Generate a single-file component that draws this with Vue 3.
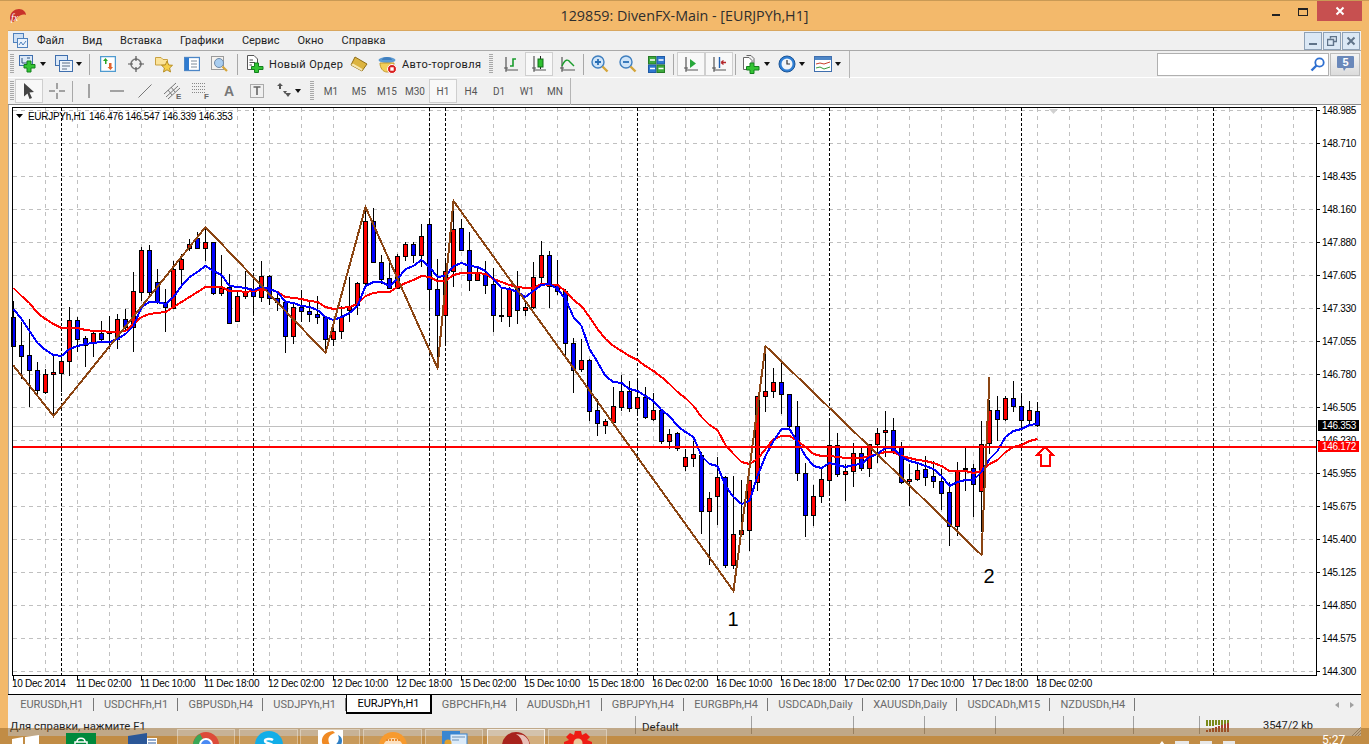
<template>
  <div class="window">
    <header class="titlebar">
      <svg class="logo" width="18" height="14" viewBox="0 0 18 14">
        <path d="M1 9 C1 3 6 0 10 0 C14 0 17 3 17 6 C14 5 11 6 9 8 C7 11 5 13 3 13 C2 12 1 11 1 9 Z" fill="#c8322a" />
        <text x="2" y="12" class="fx">fx</text>
      </svg>
      <span class="title">129859: DivenFX-Main - [EURJPYh,H1]</span>
      <div class="caption">
        <i class="cap-min"></i>
        <i class="cap-max"></i>
        <div class="cap-close">
          <svg width="10" height="10" viewBox="0 0 10 10"><path d="M1.5 1.5 L8.5 8.5 M8.5 1.5 L1.5 8.5" stroke="#fff" stroke-width="2" /></svg>
        </div>
      </div>
    </header>

    <main class="frame">
      <nav class="menubar">
        <svg class="doc-icon" width="15" height="15" viewBox="0 0 15 15">
          <rect x="0.5" y="0.5" width="10" height="9" fill="#cfe0f3" stroke="#4f81bd" />
          <rect x="4.5" y="5.5" width="10" height="9" fill="#eaf2fb" stroke="#4f81bd" />
          <path d="M6 12 L8 9 L10 12 L13 8" fill="none" stroke="#4f81bd" />
        </svg>
        <span v-for="item in menu" :key="item">{{ item }}</span>
        <div class="mdi">
          <div class="mdi-btn"><i class="mdi-min"></i></div>
          <div class="mdi-btn">
            <svg width="10" height="10" viewBox="0 0 10 10"><path d="M3.5 2.5 V0.5 H9.5 V5.5 H7 M0.5 3.5 H6.5 V9.5 H0.5 Z" fill="none" stroke="#5f7389" stroke-width="1.4" /></svg>
          </div>
          <div class="mdi-btn">
            <svg width="10" height="10" viewBox="0 0 10 10"><path d="M1.5 1.5 L8.5 8.5 M8.5 1.5 L1.5 8.5" stroke="#5f7389" stroke-width="2" /></svg>
          </div>
        </div>
      </nav>

      <div class="row">
        <i class="grip"></i>
        <div class="tb wide">
          <svg width="18" height="18" viewBox="0 0 18 18">
            <rect x="0.5" y="0.5" width="13" height="10" fill="#dbe8f7" stroke="#3f6fae" />
            <path d="M3 3 V8 M3 8 H8 M8 3 H11" stroke="#30547f" fill="none" />
            <path d="M8 6 H12 V9.5 H16 V13 H12 V17 H8 V13 H5 V9.5 H8 Z" fill="#33c433" stroke="#14801e" />
          </svg>
          <i class="caret"></i>
        </div>
        <div class="tb wide">
          <svg width="18" height="18" viewBox="0 0 18 18">
            <rect x="0.5" y="0.5" width="12" height="10" fill="#dbe8f7" stroke="#3f6fae" />
            <rect x="4.5" y="5.5" width="13" height="11" fill="#eef4fb" stroke="#3f6fae" />
            <path d="M7 8 H15 M7 11 H15 M7 14 H12" stroke="#5a6d85" />
          </svg>
          <i class="caret"></i>
        </div>
        <i class="sep s1"></i>
        <div class="tb">
          <svg width="16" height="16" viewBox="0 0 16 16">
            <rect x="0.5" y="0.5" width="15" height="15" fill="#fff" stroke="#4f9bd0" stroke-width="1.5" />
            <path d="M5 8 V5 H3 L5.5 2 L8 5 H6.5 V8 Z" fill="#2aa52a" />
            <path d="M9 7 V11 H7.5 L10.5 14 L13 11 H11.5 V7 Z" fill="#e2622b" />
          </svg>
        </div>
        <div class="tb">
          <svg width="16" height="16" viewBox="0 0 16 16">
            <circle cx="8" cy="8" r="5" fill="none" stroke="#777" stroke-width="1.5" />
            <path d="M8 0 V5 M8 11 V16 M0 8 H5 M11 8 H16" stroke="#555" stroke-width="1.2" />
          </svg>
        </div>
        <div class="tb">
          <svg width="18" height="18" viewBox="0 0 18 18">
            <path d="M0.5 2.5 H6 L8 4.5 H12.5 V10 H0.5 Z" fill="#fbe39a" stroke="#c8a040" />
            <path d="M12 6 L13.7 10 L17.5 10.3 L14.6 13 L15.5 17 L12 14.8 L8.5 17 L9.4 13 L6.5 10.3 L10.3 10 Z" fill="#f6cf4a" stroke="#b88f25" />
          </svg>
        </div>
        <div class="tb">
          <svg width="16" height="16" viewBox="0 0 16 16">
            <rect x="0.5" y="1.5" width="15" height="13" fill="#fff" stroke="#4c86c6" stroke-width="1.3" />
            <rect x="1" y="2" width="4" height="12" fill="#2f7bd0" />
            <path d="M7 5 H13 M7 8 H13 M7 11 H13" stroke="#7d8b9a" />
          </svg>
        </div>
        <div class="tb">
          <svg width="18" height="18" viewBox="0 0 18 18">
            <rect x="0.5" y="1.5" width="12" height="13" fill="#f5f2ee" stroke="#9a9a9a" />
            <circle cx="8" cy="8" r="4.5" fill="#a9cdef" stroke="#6f8aa8" />
            <path d="M11.5 11.5 L16 16" stroke="#d5a53a" stroke-width="2.2" />
          </svg>
        </div>
        <i class="sep s2"></i>
        <div class="tb text-btn order">
          <svg width="17" height="18" viewBox="0 0 17 18">
            <path d="M0.5 0.5 H7 L10.5 4 V14.5 H0.5 Z" fill="#fff" stroke="#555" />
            <path d="M2.5 5 H6 M2.5 7.5 H8 M2.5 10 H5" stroke="#555" />
            <path d="M7.5 8 H11.5 V11.5 H16 V14.5 H11.5 V17.5 H7.5 V14.5 H4.5 V11.5 H7.5 Z" fill="#33c433" stroke="#14801e" />
          </svg>
          <span>Новый Ордер</span>
        </div>
        <div class="tb">
          <svg width="18" height="16" viewBox="0 0 18 16">
            <path d="M5 1 L17 8 L12 15 L1 9 Z" fill="#dcb440" stroke="#8f6c16" />
            <path d="M1 9 L12 15 L12.5 13 L3 7.5 Z" fill="#f7e7b0" />
          </svg>
        </div>
        <div class="tb text-btn auto">
          <svg width="19" height="19" viewBox="0 0 19 19">
            <ellipse cx="9" cy="5" rx="8.5" ry="3" fill="#5d9bd3" />
            <path d="M4 5 C4 1 14 1 14 5 Z" fill="#3f7fbf" />
            <path d="M2 8 H16 C16 14 12 17 9 17 C5 17 2 13 2 8 Z" fill="#f3cf5a" stroke="#c59a2c" />
            <circle cx="14" cy="14" r="4.5" fill="#d92020" stroke="#fff" />
            <rect x="12.3" y="12.3" width="3.4" height="3.4" fill="#fff" />
          </svg>
          <span>Авто-торговля</span>
        </div>
        <i class="grip second"></i>
        <div class="tb">
          <svg width="16" height="16" viewBox="0 0 16 16">
            <path d="M3 1 V14 H15" fill="none" stroke="#555" stroke-width="1.2" />
            <path d="M1 12 H5 M3 14 V16" stroke="#555" />
            <path d="M7 10 H10 V3 H13" fill="none" stroke="#1a9c2c" stroke-width="1.6" />
          </svg>
        </div>
        <div class="tb active">
          <svg width="16" height="18" viewBox="0 0 16 18">
            <path d="M3 1 V15 H15" fill="none" stroke="#555" stroke-width="1.2" />
            <path d="M1 13 H5 M3 15 V17" stroke="#555" />
            <path d="M9.5 1 V14" stroke="#222" />
            <rect x="7" y="4" width="5" height="8" fill="#2fc02f" stroke="#126c1a" />
          </svg>
        </div>
        <div class="tb">
          <svg width="17" height="16" viewBox="0 0 17 16">
            <path d="M3 1 V14 H16" fill="none" stroke="#555" stroke-width="1.2" />
            <path d="M1 12 H5 M3 14 V16" stroke="#555" />
            <path d="M3 10 C6 3 9 3 11 6 L15 10" fill="none" stroke="#1a9c2c" stroke-width="1.4" />
          </svg>
        </div>
        <i class="sep s3"></i>
        <div class="tb">
          <svg width="18" height="18" viewBox="0 0 18 18">
            <circle cx="7" cy="7" r="6" fill="#cfe4f8" stroke="#3f7fbf" stroke-width="1.4" />
            <path d="M4 7 H10 M7 4 V10" stroke="#2a6fb5" stroke-width="1.8" />
            <path d="M11.5 11.5 L16.5 16.5" stroke="#d5a53a" stroke-width="2.4" />
          </svg>
        </div>
        <div class="tb">
          <svg width="18" height="18" viewBox="0 0 18 18">
            <circle cx="7" cy="7" r="6" fill="#cfe4f8" stroke="#3f7fbf" stroke-width="1.4" />
            <path d="M4 7 H10" stroke="#2a6fb5" stroke-width="1.8" />
            <path d="M11.5 11.5 L16.5 16.5" stroke="#d5a53a" stroke-width="2.4" />
          </svg>
        </div>
        <div class="tb">
          <svg width="17" height="17" viewBox="0 0 17 17">
            <rect x="0.5" y="0.5" width="7.5" height="7.5" fill="#3eaa3e" stroke="#267a26" />
            <rect x="9" y="0.5" width="7.5" height="7.5" fill="#2f78d0" stroke="#1f5aa5" />
            <rect x="0.5" y="9" width="7.5" height="7.5" fill="#2f78d0" stroke="#1f5aa5" />
            <rect x="9" y="9" width="7.5" height="7.5" fill="#3eaa3e" stroke="#267a26" />
            <path d="M2 4 H7 M10.5 4 H15.5 M2 12.5 H7 M10.5 12.5 H15.5" stroke="#fff" stroke-width="1.5" />
          </svg>
        </div>
        <i class="sep s4"></i>
        <div class="tb active">
          <svg width="16" height="16" viewBox="0 0 16 16">
            <path d="M3 1 V14 H15" fill="none" stroke="#555" stroke-width="1.2" />
            <path d="M1 12 H5 M3 14 V16" stroke="#555" />
            <path d="M7 3 L13 7.5 L7 12 Z" fill="#27a83a" />
          </svg>
        </div>
        <div class="tb active">
          <svg width="16" height="16" viewBox="0 0 16 16">
            <path d="M3 1 V14 H15" fill="none" stroke="#555" stroke-width="1.2" />
            <path d="M1 12 H5 M3 14 V16" stroke="#555" />
            <path d="M8.5 1 V12" stroke="#1d5fb0" stroke-width="1.4" />
            <path d="M15 6.5 L10 6.5 M10 6.5 L12.5 4.5 M10 6.5 L12.5 8.5" stroke="#b3262a" fill="none" stroke-width="1.3" />
          </svg>
        </div>
        <i class="sep s5"></i>
        <div class="tb wide">
          <svg width="19" height="19" viewBox="0 0 19 19">
            <path d="M1.5 2.5 H7 L10 5.5 V14.5 H1.5 Z" fill="#fff" stroke="#666" />
            <path d="M4.5 0.5 H9 L12 3.5 V8" fill="none" stroke="#666" />
            <path d="M8 8 H12 V11.5 H17 V15 H12 V18.5 H8 V15 H4.5 V11.5 H8 Z" fill="#33c433" stroke="#14801e" />
          </svg>
          <i class="caret"></i>
        </div>
        <div class="tb wide">
          <svg width="18" height="18" viewBox="0 0 18 18">
            <circle cx="9" cy="9" r="8" fill="#2f7fd5" stroke="#1c5596" />
            <circle cx="9" cy="9" r="5.5" fill="#f2f5f8" />
            <path d="M9 5 V9 H12" fill="none" stroke="#333" stroke-width="1.2" />
          </svg>
          <i class="caret"></i>
        </div>
        <div class="tb wide">
          <svg width="18" height="16" viewBox="0 0 18 16">
            <rect x="0.5" y="0.5" width="17" height="15" fill="#fff" stroke="#3f6fae" />
            <rect x="1" y="1" width="16" height="3" fill="#4f87c7" />
            <path d="M2 8 L6 7 L10 8 L16 6" fill="none" stroke="#c9402c" />
            <path d="M2 12 L6 11 L10 13 L16 11" fill="none" stroke="#3b9a3b" />
          </svg>
          <i class="caret"></i>
        </div>
        <i class="bar-end"></i>
        <div class="search">
          <svg width="15" height="15" viewBox="0 0 15 15">
            <circle cx="9.5" cy="5.5" r="4.2" fill="#fff" stroke="#2e6fd0" stroke-width="1.8" />
            <path d="M6.5 8.5 L1.5 13.5" stroke="#2e6fd0" stroke-width="2.4" />
          </svg>
        </div>
        <div class="message">
          <svg width="17" height="17" viewBox="0 0 17 17">
            <path d="M1 0 H16 Q17 0 17 1 V11 Q17 12 16 12 H9 L7 15 L6 12 H1 Q0 12 0 11 V1 Q0 0 1 0 Z" fill="#6a88ba" />
            <text x="8.5" y="10" class="msg-num">5</text>
          </svg>
        </div>
      </div>

      <div class="row">
        <i class="grip"></i>
        <div class="tb active first">
          <svg width="14" height="18" viewBox="0 0 14 18">
            <path d="M2 1 L12 10 L7.5 10.5 L10 16 L7.5 17 L5.5 11.5 L2 14.5 Z" fill="#444" />
          </svg>
        </div>
        <div class="tb">
          <svg width="16" height="16" viewBox="0 0 16 16"><path d="M8 0 V6 M8 10 V16 M0 8 H6 M10 8 H16" stroke="#555" /></svg>
        </div>
        <i class="sep s6"></i>
        <div class="tb">
          <svg width="4" height="14" viewBox="0 0 4 14"><path d="M2 0 V14" stroke="#555" /></svg>
        </div>
        <div class="tb">
          <svg width="14" height="4" viewBox="0 0 14 4"><path d="M0 2 H14" stroke="#555" /></svg>
        </div>
        <div class="tb">
          <svg width="14" height="14" viewBox="0 0 14 14"><path d="M0.5 13.5 L13.5 0.5" stroke="#777" /></svg>
        </div>
        <div class="tb">
          <svg width="20" height="18" viewBox="0 0 20 18">
            <path d="M1 12 L13 1 M3 15 L15 4 M5 17 L17 6" stroke="#777" />
            <path d="M5 8 L9 13 M8 5 L12 10" stroke="#777" />
            <text x="13" y="17" class="tool-letter">E</text>
          </svg>
        </div>
        <div class="tb">
          <svg width="20" height="18" viewBox="0 0 20 18">
            <path d="M1 1.5 H15 M1 4.5 H15 M1 7.5 H15 M1 10.5 H15" stroke="#888" stroke-dasharray="1 1" />
            <text x="13" y="17" class="tool-letter">F</text>
          </svg>
        </div>
        <div class="tb">
          <span class="tool-a">A</span>
        </div>
        <div class="tb">
          <svg width="14" height="16" viewBox="0 0 14 16">
            <rect x="0.5" y="1.5" width="13" height="13" fill="none" stroke="#666" stroke-dasharray="1 1" />
            <path d="M3.5 4 H10.5 M7 4 V12" stroke="#666" stroke-width="1.6" />
          </svg>
        </div>
        <div class="tb wide arrows">
          <svg width="16" height="16" viewBox="0 0 16 16">
            <path d="M1 3 L4 0 L7 3 L5 3 L5 6 L3 6 L3 3 Z M9 10 H15 L12 14 Z M7 8 L11 8 L9 11 Z" fill="#555" />
          </svg>
          <i class="caret"></i>
        </div>
        <i class="grip third"></i>
        <div v-for="tf in periods" :key="tf" class="tb tf" :class="{ active: tf === 'H1' }">{{ tf }}</div>
        <i class="bar-end short"></i>
      </div>

      <section class="chart">
        <svg width="1353" height="589" viewBox="8 106 1353 589">
          <line v-for="y in priceLabels" :key="'h' + y.y" x1="13" x2="1316" :y1="y.y + 0.5" :y2="y.y + 0.5" class="grid" />
          <line v-for="x in gridX" :key="'v' + x" :x1="x + 0.5" :x2="x + 0.5" y1="109" y2="676" class="grid" />
          <line v-for="x in sepX" :key="'s' + x" :x1="x + 0.5" :x2="x + 0.5" y1="109" y2="676" class="period-sep" />
          <line x1="13" x2="1316" y1="427.5" y2="427.5" class="bid" />

          <g v-for="c in candles" :key="c.x" class="crisp">
            <line :x1="c.x + 0.5" :x2="c.x + 0.5" :y1="c.hi" :y2="c.lo" stroke="#000" />
            <rect :x="c.x - 1.5" :y="c.top + 0.5" width="4" :height="c.height" :fill="c.fill" stroke="#000" />
          </g>

          <polyline :points="redLine" class="ma red-ma" />
          <polyline :points="blueLine" class="ma blue-ma" />
          <polyline :points="zigzag" class="zig" />
          <line x1="13" x2="1316" y1="448" y2="448" class="level" />
          <path d="M1045 448 L1053 456 H1049.5 V467 H1040.5 V456 H1037 Z" class="up-arrow" />
          <path d="M1049 110 H1058 L1053.5 115 Z" fill="#d0d0d0" />

          <text x="733" y="627" class="mark">1</text>
          <text x="989" y="584" class="mark">2</text>

          <path d="M16 115 H23 L19.5 119 Z" fill="#000" />
          <text x="28" y="121" class="axis">EURJPYh,H1</text>
          <text x="89" y="121" class="axis">146.476 146.547 146.339 146.353</text>

          <rect x="12.5" y="108.5" width="1304" height="568" class="border" />

          <g v-for="p in priceLabels" :key="p.label">
            <line x1="1317" x2="1320" :y1="p.y + 0.5" :y2="p.y + 0.5" stroke="#000" />
            <text x="1322" :y="p.y + 4" class="axis">{{ p.label }}</text>
          </g>
          <rect x="1318" y="421" width="41" height="11" fill="#000" />
          <text x="1322" y="430" class="axis inv">146.353</text>
          <rect x="1318" y="442" width="41" height="11" fill="#ff0000" />
          <text x="1322" y="451" class="axis inv">146.172</text>

          <g v-for="t in timeLabels" :key="t.label">
            <line :x1="t.x + 1.5" :x2="t.x + 1.5" y1="677" y2="681" stroke="#000" />
            <text :x="t.x" y="688" class="axis">{{ t.label }}</text>
          </g>
        </svg>
      </section>

      <div class="tabs">
        <span v-for="tab in tabs" :key="tab" class="tab" :class="{ current: tab === 'EURJPYh,H1' }">{{ tab }}</span>
        <div class="tab-nav">
          <i class="nav-left"></i>
          <i class="nav-right"></i>
        </div>
      </div>

      <footer class="status">
        <span class="cell help">Для справки, нажмите F1</span>
        <span class="cell def">Default</span>
        <span class="cell c1"></span>
        <span class="cell c2"></span>
        <span class="cell c3"></span>
        <span class="cell c4"></span>
        <span class="cell c5"></span>
        <span class="cell c6"></span>
        <span class="cell traffic">
          <svg width="24" height="13" viewBox="0 0 24 13">
            <rect v-for="b in trafficBars" :key="b.key" :x="b.x" :y="b.y" width="2" :height="b.h" :fill="b.c" />
          </svg>
          <span>3547/2 kb</span>
        </span>
        <svg class="sizer" width="9" height="9" viewBox="0 0 9 9">
          <path d="M0 9 L9 0 M3 9 L9 3 M6 9 L9 6" stroke="#999" />
        </svg>
      </footer>
    </main>

    <div class="taskbar">
      <svg class="start" width="27" height="12" viewBox="0 0 27 12">
        <path d="M0 4 L11 2 V12 H0 Z M13 2 L27 0 V12 H13 Z" fill="#fff" />
      </svg>
      <div class="store">
        <svg width="30" height="12" viewBox="0 0 30 12">
          <path d="M9 10 V6 H21 V10" fill="none" stroke="#fff" stroke-width="1.5" />
          <path d="M11 6 C11 1 19 1 19 6" fill="none" stroke="#fff" stroke-width="1.5" />
        </svg>
      </div>
      <svg class="word" width="30" height="12" viewBox="0 0 30 12">
        <path d="M0 3 L19 0 V12 H0 Z" fill="#2b5797" />
        <rect x="19" y="5" width="10" height="7" fill="#fff" />
        <path d="M20 7 H28 M20 10 H28" stroke="#2b5797" />
      </svg>
      <div class="task-btn b1">
        <svg width="28" height="14" viewBox="0 0 28 14">
          <circle cx="14" cy="14" r="13" fill="#dd4b39" />
          <path d="M14 14 L2 20 A13 13 0 0 1 8 3 Z" fill="#3aa757" />
          <circle cx="14" cy="14" r="6" fill="#4a8af4" stroke="#fff" stroke-width="2" />
        </svg>
      </div>
      <div class="task-btn b2">
        <svg width="30" height="15" viewBox="0 0 30 15">
          <circle cx="15" cy="15" r="14" fill="#12aee8" />
          <path d="M19 10 C16 8 11 9 11 11 C11 14 19 13 19 16" fill="none" stroke="#fff" stroke-width="2.5" />
        </svg>
      </div>
      <div class="task-btn b3">
        <svg width="25" height="15" viewBox="0 0 25 15">
          <rect width="25" height="15" fill="#fff" />
          <path d="M15 1 C5 2 2 10 5 15 H12 C9 10 10 5 17 3 Z" fill="#f08a24" />
          <path d="M20 5 C22 9 20 13 17 15 H23 C25 10 24 7 20 5 Z" fill="#2f7fc5" />
        </svg>
      </div>
      <div class="task-btn b4">
        <svg width="30" height="14" viewBox="0 0 30 14">
          <circle cx="15" cy="15" r="14" fill="#f79a2e" />
          <circle cx="15" cy="17" r="10" fill="#fbe0c0" />
          <path d="M8 9 H22" stroke="#e58a30" stroke-width="2" stroke-dasharray="2 1" />
        </svg>
      </div>
      <div class="task-btn b5">
        <svg width="27" height="14" viewBox="0 0 27 14">
          <rect x="1" y="0" width="18" height="14" fill="#3b86d1" />
          <rect x="9" y="3" width="17" height="11" fill="#dcebf9" stroke="#3b86d1" />
          <path d="M11 6 H24 M11 9 H18" stroke="#6a8fb5" />
          <circle cx="7" cy="12" r="3.5" fill="#e0a030" />
        </svg>
      </div>
      <div class="task-btn b6 open">
        <svg width="30" height="14" viewBox="0 0 30 14">
          <circle cx="15" cy="15" r="14" fill="#a8231c" />
          <path d="M22 4 C27 7 29 11 28 15 H22 C22 11 20 6 15 3 Z" fill="#e8c0b8" />
        </svg>
      </div>
      <div class="task-btn b7">
        <svg width="28" height="14" viewBox="0 0 28 14">
          <path d="M11 0 H17 L18 4 L22 2 L26 6 L23 9 L28 11 V16 H0 V11 L5 9 L2 6 L6 2 L10 4 Z" fill="#ee1c14" />
          <circle cx="14" cy="12" r="4.5" fill="#e8c99c" />
        </svg>
      </div>
      <div class="tray">
        <i class="tray-up"></i>
        <i class="tray-box"></i>
        <i class="tray-box small"></i>
        <i class="tray-box small"></i>
      </div>
      <span class="clock">5:27</span>
    </div>
  </div>
</template>

<script setup>
const menu = ['Файл', 'Вид', 'Вставка', 'Графики', 'Сервис', 'Окно', 'Справка']
const periods = ['M1', 'M5', 'M15', 'M30', 'H1', 'H4', 'D1', 'W1', 'MN']
const tabs = [
  'EURUSDh,H1', 'USDCHFh,H1', 'GBPUSDh,H4', 'USDJPYh,H1', 'EURJPYh,H1', 'GBPCHFh,H4', 'AUDUSDh,H1',
  'GBPJPYh,H4', 'EURGBPh,H4', 'USDCADh,Daily', 'XAUUSDh,Daily', 'USDCADh,M15', 'NZDUSDh,H4',
]

const prices = [
  '148.985', '148.710', '148.435', '148.160', '147.880', '147.605', '147.330', '147.055', '146.780',
  '146.505', '146.230', '145.955', '145.675', '145.400', '145.125', '144.850', '144.575', '144.300',
]
const priceLabels = prices.map((label, i) => ({ label, y: 111 + i * 33 }))

const times = [
  '10 Dec 2014', '11 Dec 02:00', '11 Dec 10:00', '11 Dec 18:00', '12 Dec 02:00', '12 Dec 10:00',
  '12 Dec 18:00', '15 Dec 02:00', '15 Dec 10:00', '15 Dec 18:00', '16 Dec 02:00', '16 Dec 10:00',
  '16 Dec 18:00', '17 Dec 02:00', '17 Dec 10:00', '17 Dec 18:00', '18 Dec 02:00',
]
const timeLabels = times.map((label, i) => ({ label, x: 12 + i * 64 }))

const gridX = Array.from({ length: 40 }, (_, i) => 45 + i * 32)
const sepX = [61, 253, 429, 445, 637, 829, 1021, 1213]

// r/b, high, body top, body bottom, low (screen y)
const bars = [
  'b',302,318,347,347, 'b',323,346,357,380, 'b',320,356,371,408, 'b',363,371,391,397, 'r',370,375,393,395,
  'r',357,373,375,417, 'r',358,362,374,393, 'r',308,321,362,377, 'b',318,321,340,353, 'b',337,339,346,368,
  'r',332,334,344,358, 'b',322,334,340,343, 'b',317,333,334,350, 'r',315,320,340,350, 'b',310,320,328,333,
  'r',273,292,328,353, 'r',248,251,293,302, 'b',246,251,293,298, 'b',270,283,303,305, 'b',290,303,308,333,
  'r',262,270,309,310, 'r',255,260,270,288, 'r',240,245,249,252, 'b',233,239,249,249, 'r',228,243,249,262,
  'b',243,243,294,296, 'r',256,289,294,297, 'b',275,288,324,325, 'r',293,297,322,323, 'r',272,292,297,300,
  'b',280,292,297,315, 'r',262,277,298,303, 'b',276,277,299,306, 'b',295,299,303,312, 'b',302,303,337,354,
  'r',303,308,337,345, 'b',291,308,312,323, 'b',303,312,315,323, 'b',297,315,318,325, 'b',317,318,340,353,
  'r',320,332,340,347, 'r',307,318,332,340, 'r',278,307,311,323, 'r',283,284,306,316, 'r',208,222,284,288,
  'b',209,222,263,264, 'b',256,263,280,285, 'b',263,279,289,290, 'r',255,257,289,290, 'r',243,245,257,262,
  'b',243,245,256,264, 'r',225,237,256,268, 'b',222,225,290,310, 'b',260,290,316,360, 'r',260,272,316,347,
  'r',212,230,272,288, 'b',220,229,251,252, 'b',233,251,281,292, 'r',268,274,281,282, 'b',262,274,286,295,
  'b',269,285,316,333, 'b',290,316,317,323, 'r',288,290,317,328, 'b',272,289,311,325, 'r',303,308,311,317,
  'r',263,278,308,310, 'r',242,256,278,287, 'b',252,256,287,309, 'b',261,286,292,296, 'b',290,292,344,357,
  'b',339,344,371,394, 'r',340,361,370,373, 'b',360,361,412,422, 'b',400,411,424,437, 'r',420,422,426,435,
  'r',388,407,423,425, 'r',376,392,408,412, 'b',382,392,409,413, 'r',382,398,409,417, 'b',388,398,418,420,
  'r',394,411,420,422, 'b',410,411,442,445, 'r',430,435,442,450, 'b',433,434,449,452, 'r',450,458,467,472,
  'r',442,455,459,468, 'b',453,456,512,535, 'r',493,499,512,566, 'r',458,478,497,526, 'b',477,478,566,569,
  'r',477,535,566,570, 'r',481,531,535,537, 'r',482,481,531,552, 'r',397,397,483,492, 'r',353,392,397,413,
  'r',369,383,392,399, 'b',364,383,395,415, 'b',395,395,427,429, 'b',402,427,474,482, 'b',464,474,516,538,
  'r',486,497,516,527, 'r',468,480,497,504, 'r',420,446,481,496, 'b',434,446,475,478, 'r',465,472,475,502,
  'r',444,454,472,488, 'b',447,454,469,472, 'r',445,445,469,478, 'r',429,434,445,464, 'r',412,431,433,458,
  'b',419,431,453,455, 'b',443,447,483,485, 'r',465,480,482,507, 'r',463,471,480,482, 'b',457,470,478,487,
  'b',462,477,482,489, 'b',470,482,494,511, 'b',483,493,527,547, 'r',463,472,527,537, 'r',449,469,470,492,
  'b',465,469,485,518, 'r',422,445,492,533, 'r',401,411,444,455, 'b',397,411,420,442, 'r',397,399,420,422,
  'b',382,399,407,413, 'b',397,407,421,430, 'r',402,411,421,426, 'b',403,412,426,428,
]
const candles = []
for (let i = 0; i < bars.length; i += 5) {
  const top = Math.min(bars[i + 2], bars[i + 3])
  const bot = Math.max(bars[i + 2], bars[i + 3])
  candles.push({
    x: 13 + (i / 5) * 8,
    hi: Math.min(bars[i + 1], top),
    lo: Math.max(bars[i + 4], bot),
    top,
    height: bot - top,
    fill: bars[i] === 'r' ? '#ff0000' : '#0000ff',
  })
}

const toPoints = (ys) => ys.map((y, i) => `${13.5 + i * 8},${y}`).join(' ')

const blueLine = toPoints([
  310,320,332,344,351,356,357,350,347,345,344,343,343,340,335,327,308,303,303,305,298,287,278,273,267,272,276,287,
  288,289,291,288,290,293,303,304,307,308,311,318,321,318,314,307,287,283,283,287,280,270,267,261,268,278,277,267,
  264,267,268,272,280,289,290,293,298,292,286,285,290,300,318,327,350,363,377,383,384,390,392,397,402,411,417,427,
  433,438,457,465,467,487,498,505,502,477,457,442,430,430,443,457,467,469,464,466,468,466,465,458,455,449,449,458,
  462,464,467,470,477,487,483,481,481,473,460,452,438,432,430,426,425,
])
const redLine = toPoints([
  289,297,304,314,320,325,329,329,329,331,332,332,333,333,332,325,318,315,314,313,308,303,298,293,288,288,288,292,
  292,293,292,291,290,293,298,299,300,302,303,308,310,309,308,305,297,294,293,293,288,284,281,277,278,282,282,276,
  274,274,274,275,280,283,286,288,289,289,285,286,286,292,301,307,318,330,340,347,352,357,361,367,372,378,385,393,
  399,407,418,426,431,446,455,463,465,460,450,440,437,437,442,448,455,457,457,458,459,459,459,457,455,453,453,457,
  459,461,462,464,467,472,472,472,474,472,465,461,453,448,446,442,440,
])
const zigzag = '13,366 53.5,417 205.5,228 325.5,354 365.5,208 437.5,369 453.5,202 733.5,592 765.5,347 981.5,556 989.5,378'

const trafficBars = Array.from({ length: 8 }, (_, i) => ({ key: 'g' + i, x: i * 3, y: 0, h: 6 - Math.floor(i / 3), c: '#7a8a1a' }))
  .concat(Array.from({ length: 8 }, (_, i) => ({ key: 'r' + i, x: i * 3, y: 12 - (i + 2), h: i + 2, c: '#a8402a' })))
</script>

<style>
html, body {
  margin: 0;
  padding: 0;
  overflow: hidden;
}
</style>

<style scoped>
.window {
  position: relative;
  width: 1369px;
  height: 744px;
  overflow: hidden;
  display: flex;
  flex-direction: column;
  background: #f3b96b;
  border-top: 1px solid #c99a55;
  box-sizing: border-box;
  font-family: Roboto, "Liberation Sans", sans-serif;
}

.titlebar {
  position: relative;
  height: 29px;
  flex: none;
  display: flex;
  align-items: center;
  justify-content: center;
}

.logo {
  position: absolute;
  left: 9px;
  top: 8px;
}

.fx {
  font: italic 10px "Liberation Serif", serif;
  fill: #fff;
}

.title {
  font-family: "Open Sans", sans-serif;
  font-size: 14.3px;
  color: #2e2e2e;
}

.caption {
  position: absolute;
  top: 0;
  right: 7px;
  display: flex;
  align-items: flex-start;
}

.cap-min {
  width: 8px;
  height: 2px;
  background: #222;
  margin: 13px 18px 0 0;
}

.cap-max {
  width: 8px;
  height: 5px;
  border: 1px solid #222;
  border-top-width: 2px;
  margin: 7px 9px 0 0;
}

.cap-close {
  width: 45px;
  height: 20px;
  background: #c75050;
  display: flex;
  align-items: center;
  justify-content: center;
}

.frame {
  flex: none;
  height: 706px;
  margin: 0 8px;
  background: #f0f0f0;
  display: flex;
  flex-direction: column;
  font-size: 11px;
  color: #222;
}

.menubar {
  height: 22px;
  box-sizing: border-box;
  border-top: 1px solid #d9a75f;
  border-bottom: 1px solid #a9a9a9;
  display: flex;
  align-items: center;
  gap: 18px;
  font-size: 11px;
  padding-left: 5px;
}

.doc-icon {
  margin-right: -9px;
}

.mdi {
  margin-left: auto;
  margin-right: 1px;
  display: flex;
  gap: 1px;
}

.mdi-btn {
  width: 18px;
  height: 18px;
  box-sizing: border-box;
  border: 1px solid #8ea1b6;
  background: #dbe8f5;
  display: flex;
  align-items: center;
  justify-content: center;
}

.mdi-btn i {
  width: 8px;
  height: 2px;
  background: #5f7389;
  margin-top: 6px;
}

.row {
  height: 27px;
  flex: none;
  box-sizing: border-box;
  border-bottom: 1px solid #fff;
  display: flex;
  align-items: center;
  padding-left: 2px;
}

.row + .row {
  border-bottom: 1px solid #8c8c8c;
}

.grip {
  width: 4px;
  height: 20px;
  flex: none;
  background: repeating-linear-gradient(to bottom, #a8a8a8 0 1px, transparent 1px 2px);
}

.grip.second {
  margin-left: 6px;
  margin-right: 4px;
}

.grip.third {
  margin-left: 3px;
  margin-right: 3px;
}

.sep {
  width: 1px;
  height: 21px;
  flex: none;
  background: #a8a8a8;
}

.s1 { margin: 0 4px 0 3px; }
.s2 { margin: 0 3px; }
.s3 { margin: 0 2px; }
.s4 { margin: 0 3px; }
.s5 { margin: 0 1px 0 2px; }
.s6 { margin: 0 2px 0 1px; }

.tb {
  width: 28px;
  height: 24px;
  flex: none;
  box-sizing: border-box;
  display: flex;
  align-items: center;
  justify-content: center;
}

.tb svg {
  flex: none;
}

.tb.wide {
  width: 36px;
  justify-content: flex-start;
  padding-left: 5px;
}

.tb.active {
  background: #f8f8f8;
  border: 1px solid #cfcfcf;
}

.tb.first {
  margin-left: 1px;
}

.caret {
  width: 0;
  height: 0;
  margin-left: 3px;
  border: 3px solid transparent;
  border-top: 4px solid #111;
  border-bottom: 0;
}

.text-btn {
  justify-content: flex-start;
  gap: 5px;
  font-size: 11px;
  color: #222;
  white-space: nowrap;
}

.text-btn span {
  letter-spacing: 0.35px;
}

.order {
  width: 104px;
  padding-left: 6px;
}

.auto {
  width: 110px;
  padding-left: 5px;
}

.arrows {
  padding-left: 7px;
}

.bar-end {
  width: 1px;
  height: 27px;
  background: #b5b5b5;
  margin-left: 4px;
}

.bar-end.short {
  margin-left: 1px;
}

.search {
  margin-left: auto;
  width: 172px;
  height: 23px;
  box-sizing: border-box;
  background: #fff;
  border: 1px solid #b0b0b0;
  display: flex;
  align-items: center;
  justify-content: flex-end;
  padding-right: 3px;
}

.message {
  width: 30px;
  height: 23px;
  margin: 0 1px;
  box-sizing: border-box;
  border: 1px solid #bdbdbd;
  background: linear-gradient(#f4f4f4, #dcdcdc);
  display: flex;
  align-items: center;
  justify-content: center;
}

.msg-num {
  font: bold 11px "Liberation Sans", sans-serif;
  fill: #fff;
  text-anchor: middle;
}

.tool-letter {
  font: bold 8px "Liberation Sans", sans-serif;
  fill: #666;
}

.tool-a {
  font: bold 14px "Liberation Sans", sans-serif;
  color: #777;
}

.tf {
  font-size: 10px;
  color: #555;
}

.chart {
  height: 589px;
  flex: none;
  background: #fff;
  box-shadow: inset 1px 0 0 #a8a8a8;
}

.chart svg {
  display: block;
}

.crisp {
  shape-rendering: crispEdges;
}

.grid {
  stroke: #c0c0c0;
  stroke-dasharray: 4 4;
}

.period-sep {
  stroke: #000;
  stroke-dasharray: 3 2;
}

.bid {
  stroke: #c0c0c0;
}

.ma {
  fill: none;
  stroke-width: 2;
  stroke-linejoin: round;
  shape-rendering: crispEdges;
}

.red-ma {
  stroke: #ff0000;
}

.blue-ma {
  stroke: #0000ff;
}

.zig {
  fill: none;
  stroke: #8b4513;
  stroke-width: 2;
  shape-rendering: crispEdges;
}

.level {
  stroke: #ff0000;
  stroke-width: 2;
  shape-rendering: crispEdges;
}

.up-arrow {
  fill: #fff;
  stroke: #ff0000;
  stroke-width: 2;
  shape-rendering: crispEdges;
}

.mark {
  font: 20px "Liberation Sans", sans-serif;
  text-anchor: middle;
  fill: #000;
}

.border {
  fill: none;
  stroke: #000;
}

.axis {
  font: 10px "Liberation Sans", sans-serif;
  letter-spacing: -0.3px;
  fill: #000;
}

.inv {
  fill: #fff;
}

.tabs {
  height: 20px;
  flex: none;
  box-sizing: border-box;
  border-top: 1px solid #000;
  display: flex;
  align-items: stretch;
  padding-left: 2px;
  font-size: 11px;
  color: #6a6a6a;
}

.tab {
  padding: 0 10.2px;
  line-height: 19px;
  position: relative;
  white-space: nowrap;
}

.tab::after {
  content: "";
  position: absolute;
  right: 0;
  top: 3px;
  bottom: 3px;
  width: 1px;
  background: #777;
}

.tab.current {
  background: #fff;
  color: #000;
  border: 1px solid #000;
  border-top: 0;
  border-bottom-width: 2px;
  border-right-width: 2px;
  box-sizing: border-box;
  line-height: 18px;
}

.tab.current::after {
  display: none;
}

.tab-nav {
  margin-left: auto;
  display: flex;
  align-items: center;
  gap: 11px;
  padding-right: 7px;
}

.nav-left,
.nav-right {
  width: 0;
  height: 0;
  border: 3px solid transparent;
}

.nav-left {
  border-right: 4px solid #a0a0a0;
  border-left: 0;
}

.nav-right {
  border-left: 4px solid #a0a0a0;
  border-right: 0;
}

.status {
  position: relative;
  flex: 1;
  display: flex;
  font-size: 11.5px;
  color: #222;
}

.cell {
  box-sizing: border-box;
  border-right: 1px solid #a0a0a0;
  margin: 2px 0;
  display: flex;
  align-items: flex-start;
  padding-top: 4px;
}

.help {
  width: 628px;
  padding-left: 2px;
  font-size: 11.3px;
}

.def {
  width: 116px;
  padding-left: 6px;
}

.c1 { width: 102px; }
.c2 { width: 71px; }
.c3 { width: 71px; }
.c4 { width: 68px; }
.c5 { width: 70px; }
.c6 { width: 66px; }

.traffic {
  border: 0;
  padding: 3px 0 0 6px;
  gap: 33px;
  font-size: 11px;
}

.traffic svg {
  margin-top: 1px;
}

.sizer {
  position: absolute;
  right: 0;
  bottom: 0;
}

.taskbar {
  position: absolute;
  left: 0;
  top: 727px;
  width: 1369px;
  height: 16px;
  background: rgba(144, 96, 32, 0.5);
  display: flex;
  align-items: flex-start;
  overflow: hidden;
}

.start {
  margin: 7px 0 0 12px;
}

.store {
  width: 30px;
  height: 16px;
  background: #00893c;
  margin: 5px 0 0 27px;
}

.word {
  margin: 5px 0 0 32px;
}

.task-btn {
  height: 16px;
  margin-top: 1px;
  box-sizing: border-box;
  border: 1px solid rgba(255, 255, 255, 0.35);
  border-bottom: 0;
  background: rgba(255, 255, 255, 0.12);
  display: flex;
  align-items: flex-end;
  justify-content: center;
  overflow: hidden;
}

.b1 { width: 58px; margin-left: 19px; }
.b2 { width: 59px; margin-left: 4px; }
.b3 { width: 60px; margin-left: 2px; }
.b4 { width: 59px; margin-left: 3px; }
.b5 { width: 58px; margin-left: 3px; }
.b6 { width: 58px; margin-left: 4px; }
.b7 { width: 59px; margin-left: 3px; }

.open {
  border-color: rgba(255, 255, 255, 0.7);
  background: rgba(255, 255, 255, 0.3);
}

.tray {
  display: flex;
  align-items: flex-start;
  margin: 13px 0 0 552px;
}

.tray-up {
  width: 0;
  height: 0;
  border: 3px solid transparent;
  border-bottom: 4px solid #fff;
  border-top: 0;
}

.tray-box {
  width: 14px;
  height: 6px;
  background: #e8e8e8;
  margin-left: 10px;
}

.tray-box.small {
  width: 12px;
  margin-left: 11px;
}

.clock {
  color: #fff;
  font-size: 12px;
  margin: 5px 0 0 87px;
}
</style>
